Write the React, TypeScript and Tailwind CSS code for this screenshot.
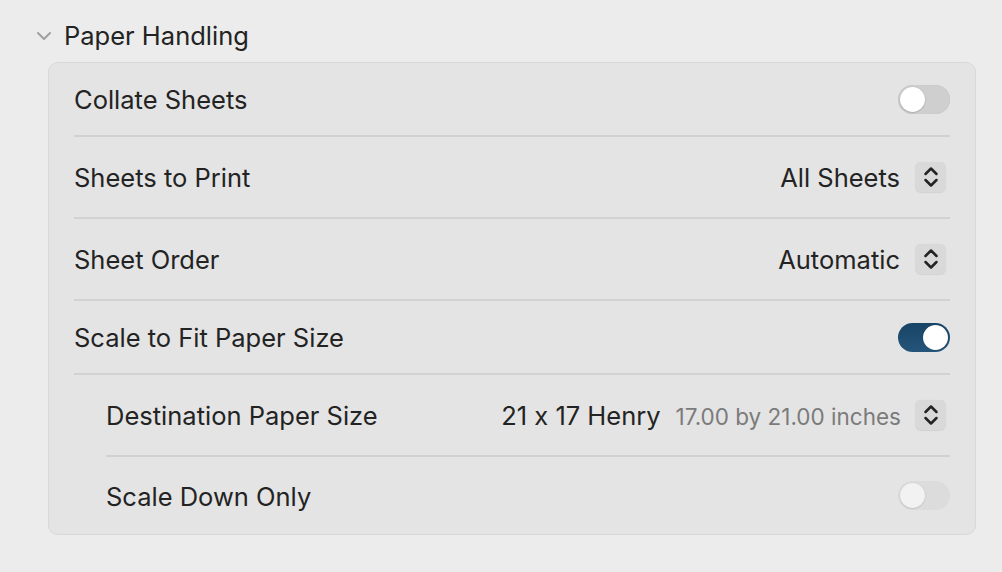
import React from "react";

const Toggle = ({ on = false, disabled = false }: { on?: boolean; disabled?: boolean }) => {
  if (on) {
    return (
      <div className="flex h-[29px] w-[52px] items-center justify-end rounded-full bg-gradient-to-b from-[#184466] to-[#24557a] p-[2px]">
        <div className="h-[25px] w-[25px] rounded-full bg-white shadow-[0_0_1px_rgba(0,0,0,0.4)]" />
      </div>
    );
  }
  return (
    <div
      className={
        disabled
          ? "flex h-[29px] w-[52px] items-center rounded-full bg-[#dcdcdc] p-[2px]"
          : "flex h-[29px] w-[52px] items-center rounded-full bg-[#cfcfcf] p-[2px] shadow-[inset_0_0_1px_rgba(0,0,0,0.15)]"
      }
    >
      <div
        className={
          disabled
            ? "h-[25px] w-[25px] rounded-full bg-[#f2f2f2] shadow-[0_0.5px_1.5px_rgba(0,0,0,0.2)]"
            : "h-[25px] w-[25px] rounded-full bg-white shadow-[0_0.5px_1.5px_rgba(0,0,0,0.3)]"
        }
      />
    </div>
  );
};

const Stepper = () => (
  <div className="mr-[4px] flex h-[30px] w-[31px] items-center justify-center rounded-[6px] bg-[#d9d9d9] shadow-[0_0.5px_1px_rgba(0,0,0,0.08)]">
    <svg width="16" height="24" viewBox="0 0 16 24" fill="none" stroke="#232323" strokeWidth="2.5" strokeLinecap="round" strokeLinejoin="round">
      <path d="M2.5 9 L8 3.5 L13.5 9" />
      <path d="M2.5 15 L8 20.5 L13.5 15" />
    </svg>
  </div>
);

type Row = {
  label: string;
  h: string;
  indent?: boolean;
  lineIndent?: boolean;
  right: React.ReactNode;
  last?: boolean;
};

export default function App() {
  const rows: Row[] = [
    { label: "Collate Sheets", h: "h-[74px]", right: <Toggle /> },
    {
      label: "Sheets to Print",
      h: "h-[82px]",
      right: (
        <div className="flex items-center gap-[15px]">
          <span className="pt-[3px]">All Sheets</span>
          <Stepper />
        </div>
      ),
    },
    {
      label: "Sheet Order",
      h: "h-[82px]",
      right: (
        <div className="flex items-center gap-[15px]">
          <span className="pt-[3px]">Automatic</span>
          <Stepper />
        </div>
      ),
    },
    { label: "Scale to Fit Paper Size", h: "h-[74px]", right: <Toggle on /> },
    {
      label: "Destination Paper Size",
      h: "h-[82px]",
      indent: true,
      lineIndent: true,
      right: (
        <div className="flex items-center">
          <span className="pt-[3px]">21 x 17 Henry</span>
          <span className="ml-[15px] mr-[14px] pt-[3px] text-[22.5px] text-[#7b7b7b]">17.00 by 21.00 inches</span>
          <Stepper />
        </div>
      ),
    },
    { label: "Scale Down Only", h: "h-[77px]", indent: true, right: <Toggle disabled />, last: true },
  ];

  return (
    <div className="h-[572px] w-[1002px] bg-[#ececec] font-['Inter','Helvetica_Neue',Arial,sans-serif] text-[25.5px] text-[#232323] antialiased [font-feature-settings:'calt'_0]">
      <div className="flex h-[62px] items-center pl-[36px] pt-[10px]">
        <svg width="16" height="10" viewBox="0 0 16 10" fill="none" stroke="#a0a0a0" strokeWidth="2" strokeLinecap="round" strokeLinejoin="round">
          <path d="M2 2 L8 8 L14 2" />
        </svg>
        <span className="ml-[12px]">Paper Handling</span>
      </div>
      <div className="ml-[48px] mr-[26px] rounded-[10px] border border-[#d8d8d8] bg-[#e4e4e4] px-[25px]">
        {rows.map((r) => (
          <div key={r.label} className={r.lineIndent ? "pl-[32px]" : ""}>
            <div
              className={`flex ${r.h} items-center justify-between ${r.last ? "" : "border-b-2 border-[#d2d2d2]"}`}
            >
              <span className={`pt-[3px] ${r.indent && !r.lineIndent ? "pl-[32px]" : ""}`}>{r.label}</span>
              <div className="flex items-center">{r.right}</div>
            </div>
          </div>
        ))}
      </div>
    </div>
  );
}
